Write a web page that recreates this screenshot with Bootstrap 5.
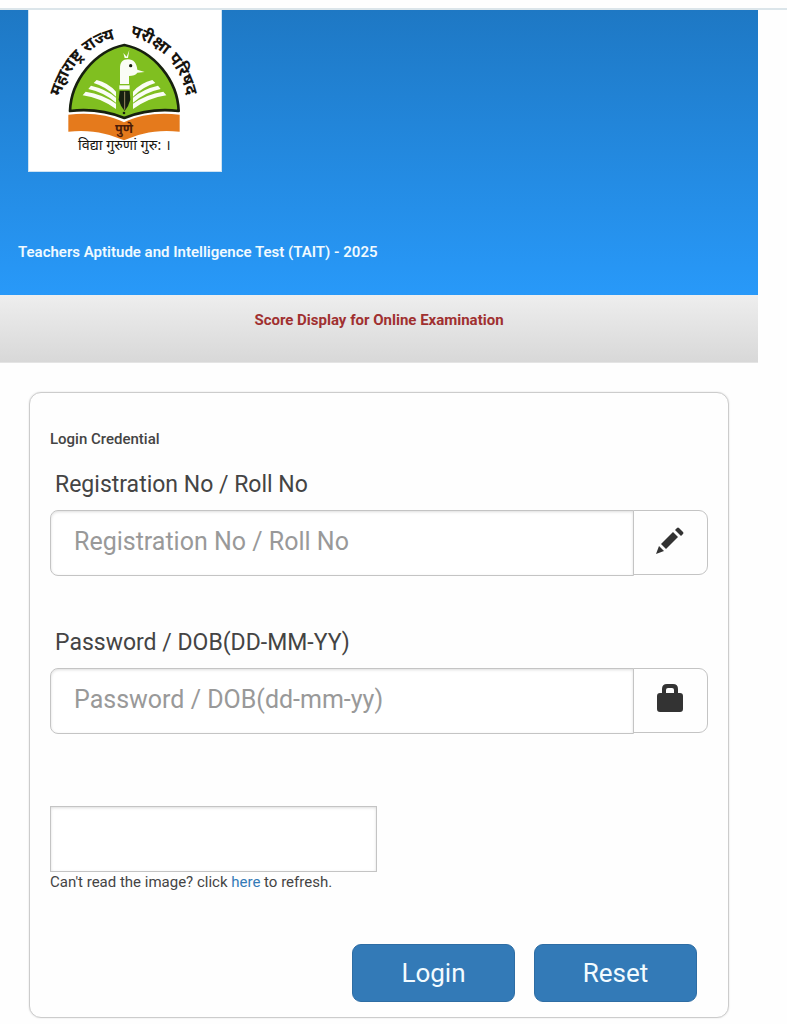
<!DOCTYPE html>
<html lang="en">
<head>
<meta charset="utf-8">
<meta name="viewport" content="width=device-width, initial-scale=1">
<title>Teachers Aptitude and Intelligence Test (TAIT) - 2025</title>
<link href="https://cdn.jsdelivr.net/npm/bootstrap@5.3.0/dist/css/bootstrap.min.css" rel="stylesheet">
<style>
  body { font-family: Roboto, "Liberation Sans", sans-serif; font-size: 15px; line-height: 20px; color: #444; background: #fefefe; }
  .top-strip { height: 10px; border-bottom: 2px solid #dbe5ea; }
  .page-shell { margin-right: 29px; }
  .site-head { background: linear-gradient(#1e78c4, #2899f9); color: #f0faff; padding-bottom: 33px; }
  .logo-link { margin-left: 28px; background: #fff; border: 1px solid #cfe3f2; border-top: 0; }
  .exam-title { font-size: 15px; line-height: 20px; font-weight: 600; margin: 70px 18px 0; }
  .sub-head { background: linear-gradient(#eee, #d8d8d8); color: #a03030; padding: 15px 0 32px; border-bottom: 1px solid #e4e4e4; }
  .sub-head h2 { font-size: 15px; line-height: 20px; font-weight: 700; }
  .login-card { margin: 29px 29px 7px; padding: 36px 20px 15px; border: 1px solid #ccc; border-radius: 12px; background: #fefefe; color: #444; box-shadow: 0 0 2px #ddd; }
  .login-card h3 { font-size: 15px; line-height: 20px; font-weight: 500; margin-bottom: 20px; }
  .field-label { font-size: 23px; line-height: 32px; margin: 0 5px 9px; }
  .field-row { margin-bottom: 51px; }
  .field-row .form-control, .captcha-box { height: 66px; border: 1px solid #c4c4c4; font-size: 25px; line-height: 32px; padding: 12px 23px 16px; box-shadow: inset 0 1px 3px #ddd; background: #fff; }
  .field-row .form-control { border-radius: 8px 0 0 8px; }
  .field-row .form-control::placeholder { color: #999; }
  .field-row .input-group-text { width: 75px; height: 65px; border: 1px solid #c4c4c4; border-radius: 0 9px 9px 0; background: #fefefe; color: #333; padding: 0 2px 6px 0; }
  .captcha-box { width: 327px; margin-top: 72px; border-radius: 0; }
  .captcha-note a { color: #337ab7; }
  .actions { gap: 19px; margin: 52px 11px 0; }
  .actions .btn { width: 163px; height: 58px; font-size: 26px; line-height: 32px; border-radius: 9px; background: #337ab7; border: 1px solid #2e6da4; color: #f2fbff; }
</style>
</head>
<body>
<div class="top-strip"></div>
<div class="page-shell">
  <header class="site-head">
    <a href="#" class="logo-link d-inline-block align-top">
      <svg class="d-block" width="192" height="161" viewBox="29 31 576 483" role="img" aria-label="Maharashtra State Council of Examination, Pune">
        <defs>
          <path id="arcLeft" d="M122 292Q168 140 305 114L330 110"/>
          <path id="arcRight" d="M331 108Q475 150 505 302L509 330"/>
        </defs>
        <path d="M152 334C155 243 226 154 315 136C404 154 475 243 478 334C410 326 360 337 315 355C270 337 220 326 152 334Z" fill="#80bf20" stroke="#17200f" stroke-width="8" stroke-linejoin="round"/>
        <path d="M147 345C213 338 267 345 314 368C362 345 415 338 481 345V396C410 388 360 402 314 422C268 402 215 388 147 396Z" fill="#e57a1c"/>
        <g fill="#fafdf5">
          <path d="M223 250L232 241Q266 249 290 276V291Q260 261 223 250Z"/>
          <path d="M207 268L215 258Q260 268 290 294V309Q252 277 207 268Z"/>
          <path d="M190 287L199 276Q251 284 290 312V328Q242 294 190 287Z"/>
          <path d="M408 250L399 241Q365 249 341 276V291Q371 261 408 250Z"/>
          <path d="M424 268L416 258Q371 268 341 294V309Q379 277 424 268Z"/>
          <path d="M441 287L432 276Q380 284 341 312V328Q389 294 441 287Z"/>
          <path d="M302 253V207C302 187 310 179 326 179C343 179 352 190 354 210L376 217L354 219C350 226 340 228 329 229V253Z"/>
          <path d="M300 257H331V269H300Z"/>
          <path d="M316 175L312 160L322 171L330 151L326 175Z"/>
        </g>
        <circle cx="334" cy="198" r="5" fill="#17200f"/>
        <path d="M301 273H331L333 300Q328 320 316 334Q303 319 298 300Z" fill="#17200f"/>
        <path d="M316 276V330" stroke="#9c8a62" stroke-width="3"/>
        <circle cx="314" cy="340" r="4" fill="#17200f"/>
        <g fill="#17140f" font-family="'Noto Sans Devanagari', 'Noto Sans', sans-serif">
          <g font-size="50" font-weight="700">
            <text><textPath href="#arcLeft">महाराष्ट्र राज्य</textPath></text>
            <text><textPath href="#arcRight">परीक्षा परिषद</textPath></text>
          </g>
          <text x="314" y="400" font-size="38" font-weight="700" text-anchor="middle" fill="#4b1c08">पुणे</text>
          <text x="315" y="450" font-size="43" text-anchor="middle">विद्या गुरुणां गुरु: ।</text>
        </g>
      </svg>
    </a>
    <h1 class="exam-title">Teachers Aptitude and Intelligence Test (TAIT) - 2025</h1>
  </header>
  <div class="sub-head text-center">
    <h2 class="m-0">Score Display for Online Examination</h2>
  </div>
  <main>
    <form class="card login-card" onsubmit="return false">
      <h3>Login Credential</h3>
      <label class="field-label" for="regNo">Registration No / Roll No</label>
      <div class="input-group field-row flex-nowrap align-items-start">
        <input class="form-control" type="text" id="regNo" placeholder="Registration No / Roll No">
        <span class="input-group-text justify-content-center">
          <svg width="30" height="30" viewBox="0 0 30 30" fill="currentColor" aria-hidden="true"><path d="M1 29L4 21L9 26Z"/><path d="M6 19L18 7L23 12L11 24Z"/><path d="M20 5L22 3Q23 2 24 3L28 7Q29 8 28 9L26 11Z"/></svg>
        </span>
      </div>
      <label class="field-label" for="dob">Password / DOB(DD-MM-YY)</label>
      <div class="input-group field-row flex-nowrap align-items-start mb-0">
        <input class="form-control" type="password" id="dob" placeholder="Password / DOB(dd-mm-yy)">
        <span class="input-group-text justify-content-center">
          <svg width="26" height="28" viewBox="0 0 26 28" fill="currentColor" aria-hidden="true"><path fill-rule="evenodd" d="M5 9V5Q5 0 10 0H16Q21 0 21 5V9H23Q26 9 26 12V25Q26 28 23 28H3Q0 28 0 25V12Q0 9 3 9ZM9 9H17V6Q17 4 15 4H11Q9 4 9 6Z"/></svg>
        </span>
      </div>
      <input class="form-control captcha-box" type="text" aria-label="Captcha text">
      <div class="captcha-note">Can't read the image? click <a href="#" class="text-decoration-none">here</a> to refresh.</div>
      <div class="actions d-flex justify-content-end">
        <button type="submit" class="btn p-0">Login</button>
        <button type="reset" class="btn p-0">Reset</button>
      </div>
    </form>
  </main>
</div>
<script src="https://cdn.jsdelivr.net/npm/bootstrap@5.3.0/dist/js/bootstrap.bundle.min.js"></script>
</body>
</html>
